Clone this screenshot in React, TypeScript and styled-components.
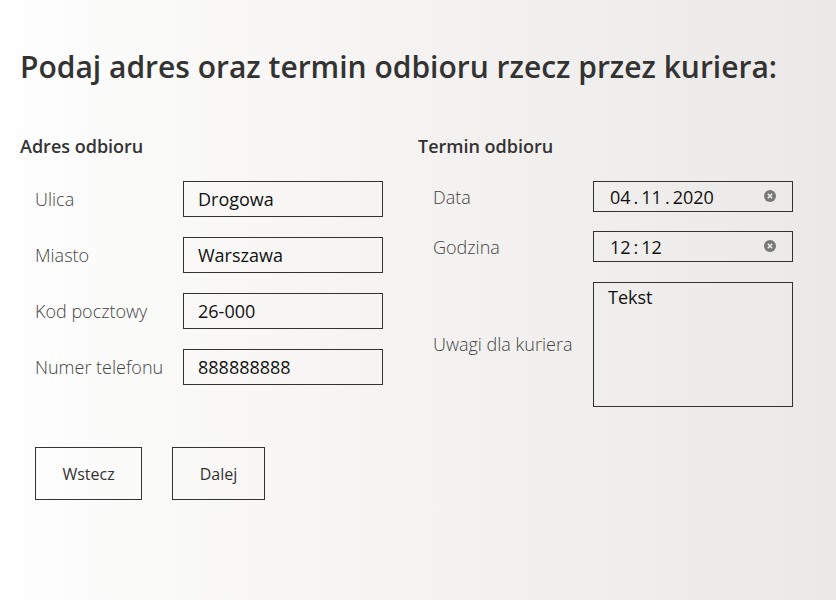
import React from "react";
import styled, { createGlobalStyle } from "styled-components";

const Global = createGlobalStyle`
  html, body { margin: 0; padding: 0; height: 100%; }
  body {
    font-family: "Open Sans", "Liberation Sans", sans-serif;
    background: linear-gradient(to right, #fefefe 0%, #f5f4f2 45%, #ebe9e7 100%);
    color: #333;
  }
  #root { min-height: 600px; }
`;

const Page = styled.div`
  width: 836px;
  height: 600px;
  box-sizing: border-box;
  padding: 46px 20px 0 20px;
`;

const Title = styled.h1`
  margin: 0;
  font-size: 30px;
  font-weight: 600;
  line-height: 42px;
  color: #333;
`;

const Columns = styled.div`
  display: grid;
  grid-template-columns: 398px 1fr;
  margin-top: 46px;
`;

const Section = styled.section`
  display: flex;
  flex-direction: column;
`;

const SectionTitle = styled.h2`
  margin: 0 0 23px 0;
  font-size: 18px;
  font-weight: 600;
  line-height: 24px;
  color: #333;
`;

const Rows = styled.div<{ $label: number; $gap: number }>`
  display: grid;
  grid-template-columns: ${(p) => p.$label}px 200px;
  row-gap: ${(p) => p.$gap}px;
  padding-left: 15px;
  align-items: center;
`;

const Label = styled.label`
  font-size: 18px;
  font-weight: 300;
  color: #444;
  line-height: 24px;
`;

const TextInput = styled.div`
  box-sizing: border-box;
  height: 36px;
  border: 1px solid #333;
  padding: 0 14px;
  display: flex;
  align-items: center;
  font-size: 18px;
  color: #111;
`;

const DateInput = styled.div`
  box-sizing: border-box;
  height: 31px;
  border: 1px solid #333;
  padding: 0 16px 0 16px;
  display: flex;
  align-items: center;
  justify-content: space-between;
  font-size: 18px;
  color: #111;
`;

const Seg = styled.span``;

const Sep = styled.span`
  margin: 0 3px;
`;

const Clear = styled.span`
  display: flex;
  width: 12px;
  height: 12px;
  margin-top: -2px;
`;

const TextArea = styled.div`
  box-sizing: border-box;
  height: 125px;
  margin-top: 1px;
  border: 1px solid #333;
  padding: 2px 14px;
  font-size: 18px;
  line-height: 24px;
  color: #111;
`;

const Buttons = styled.div`
  display: flex;
  gap: 30px;
  padding-left: 15px;
  margin-top: 62px;
`;

const Button = styled.button<{ $w: number }>`
  box-sizing: border-box;
  width: ${(p) => p.$w}px;
  height: 53px;
  border: 1px solid #333;
  background: transparent;
  font-family: "Open Sans", sans-serif;
  font-size: 16px;
  color: #333;
  padding: 0;
`;

const ClearIcon = () => (
  <svg width="12" height="12" viewBox="0 0 12 12">
    <circle cx="6" cy="6" r="6" fill="#777" />
    <path d="M3.8 3.8 L8.2 8.2 M8.2 3.8 L3.8 8.2" stroke="#eee" strokeWidth="1.5" />
  </svg>
);

export default function App() {
  return (
    <Page>
      <Global />
      <Title>Podaj adres oraz termin odbioru rzecz przez kuriera:</Title>
      <Columns>
        <Section>
          <SectionTitle>Adres odbioru</SectionTitle>
          <Rows $label={148} $gap={20}>
            <Label>Ulica</Label>
            <TextInput>Drogowa</TextInput>
            <Label>Miasto</Label>
            <TextInput>Warszawa</TextInput>
            <Label>Kod pocztowy</Label>
            <TextInput>26-000</TextInput>
            <Label>Numer telefonu</Label>
            <TextInput>888888888</TextInput>
          </Rows>
          <Buttons>
            <Button $w={107}>Wstecz</Button>
            <Button $w={93}>Dalej</Button>
          </Buttons>
        </Section>
        <Section>
          <SectionTitle>Termin odbioru</SectionTitle>
          <Rows $label={160} $gap={19}>
            <Label>Data</Label>
            <DateInput>
              <span>
                <Seg>04</Seg>
                <Sep>.</Sep>
                <Seg>11</Seg>
                <Sep>.</Sep>
                <Seg>2020</Seg>
              </span>
              <Clear>
                <ClearIcon />
              </Clear>
            </DateInput>
            <Label>Godzina</Label>
            <DateInput>
              <span>
                <Seg>12</Seg>
                <Sep>:</Sep>
                <Seg>12</Seg>
              </span>
              <Clear>
                <ClearIcon />
              </Clear>
            </DateInput>
            <Label>Uwagi dla kuriera</Label>
            <TextArea>Tekst</TextArea>
          </Rows>
        </Section>
      </Columns>
    </Page>
  );
}
